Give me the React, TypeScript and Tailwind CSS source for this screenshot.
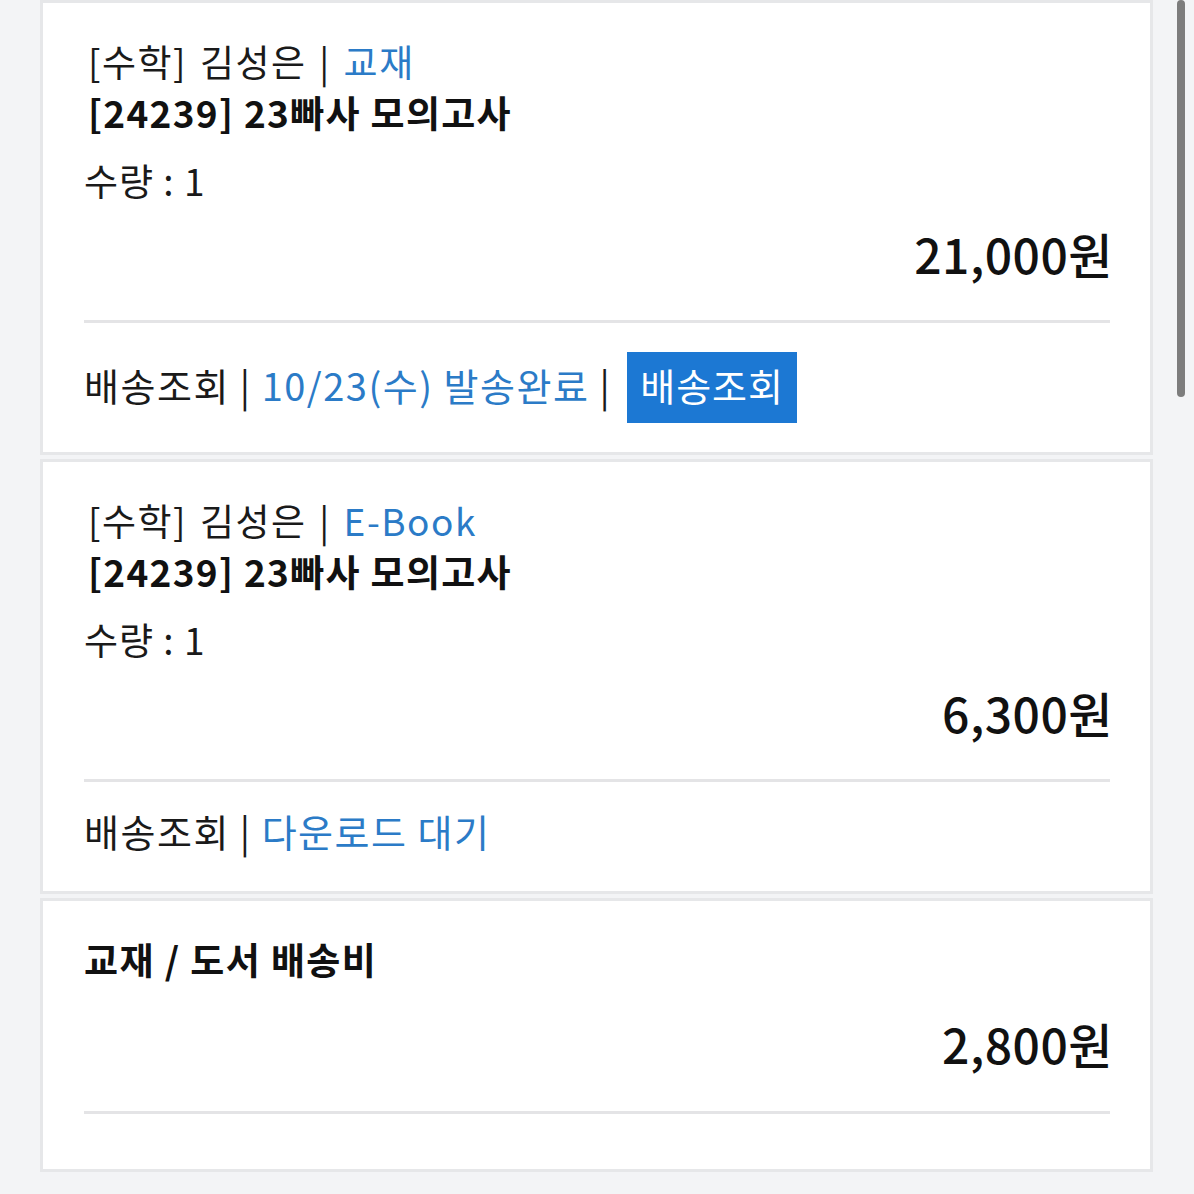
const font = { fontFamily: "'Noto Sans CJK KR', 'Noto Sans', sans-serif" };

type OrderItem = {
  subject: string;
  teacher: string;
  kind: string;
  title: string;
  qty: number;
  price: string;
};

const items: OrderItem[] = [
  { subject: '수학', teacher: '김성은', kind: '교재', title: '[24239] 23빠사 모의고사', qty: 1, price: '21,000원' },
  { subject: '수학', teacher: '김성은', kind: 'E-Book', title: '[24239] 23빠사 모의고사', qty: 1, price: '6,300원' },
];

const Divider = ({ className }: { className: string }) => (
  <div className={`h-[3px] bg-[#e4e4e6] ${className}`}></div>
);

const ItemCard = ({ item, children }: { item: OrderItem; children: React.ReactNode }) => (
  <section className="border-[3px] border-[#e6e7e9] bg-white pl-[41px] pr-[40px] pt-[33px]">
    <p className="pl-[4px] text-[37px] leading-[51px] tracking-[1.5px] [word-spacing:3px] text-[#1a1a1a]">
      [{item.subject}] {item.teacher} | <span className="text-[#2b7bc7]">{item.kind}</span>
    </p>
    <p className="pl-[4px] text-[37px] leading-[51px] tracking-[1.3px] font-semibold text-[#111]">{item.title}</p>
    <p className="mt-[17px] text-[37px] leading-[51px] tracking-[1px] text-[#1a1a1a]">수량 : {item.qty}</p>
    <p className="-mr-[3px] mt-[19px] text-right text-[48px] leading-[56px] tracking-[0.5px] font-medium text-[#111]">{item.price}</p>
    <Divider className="mt-[39px]" />
    {children}
  </section>
);

export default function App() {
  return (
    <div className="relative min-h-[1194px] bg-[#f3f4f6] pl-[40px] pr-[41px] pb-[21px]" style={font}>
      <div className="flex flex-col gap-[4px]">
        <ItemCard item={items[0]}>
          <div className="mt-[29px] mb-[29px] flex h-[71px] items-center text-[38px] tracking-[1.5px] text-[#1a1a1a]">
            <span className="pb-[6px]">배송조회 |&nbsp;</span>
            <span className="pb-[6px] text-[#2b7bc7]">10/23(수) 발송완료</span>
            <span className="pb-[6px]">&nbsp;|&nbsp;</span>
            <button className="ml-[6px] flex h-[71px] items-center bg-[#1c78d3] px-[13px] pb-[6px] text-[38px] tracking-[1px] text-white">배송조회</button>
          </div>
        </ItemCard>
        <ItemCard item={items[1]}>
          <div className="mt-[24px] mb-[33px] flex h-[52px] items-center pb-[4px] text-[38px] tracking-[1.5px] text-[#1a1a1a]">
            <span>배송조회 |&nbsp;</span>
            <span className="text-[#2b7bc7]">다운로드 대기</span>
          </div>
        </ItemCard>
        <section className="border-[3px] border-[#e6e7e9] bg-white pl-[41px] pr-[40px] pt-[33px] pb-[55px]">
          <p className="text-[37px] leading-[51px] tracking-[1.4px] font-bold text-[#111]">교재 / 도서 배송비</p>
          <p className="-mr-[3px] mt-[30px] text-right text-[48px] leading-[56px] tracking-[0.5px] font-medium text-[#111]">2,800원</p>
          <Divider className="mt-[40px]" />
        </section>
      </div>
      <div className="absolute right-[9px] top-0 h-[397px] w-[8px] rounded-full bg-[#7d7d7d]"></div>
    </div>
  );
}
